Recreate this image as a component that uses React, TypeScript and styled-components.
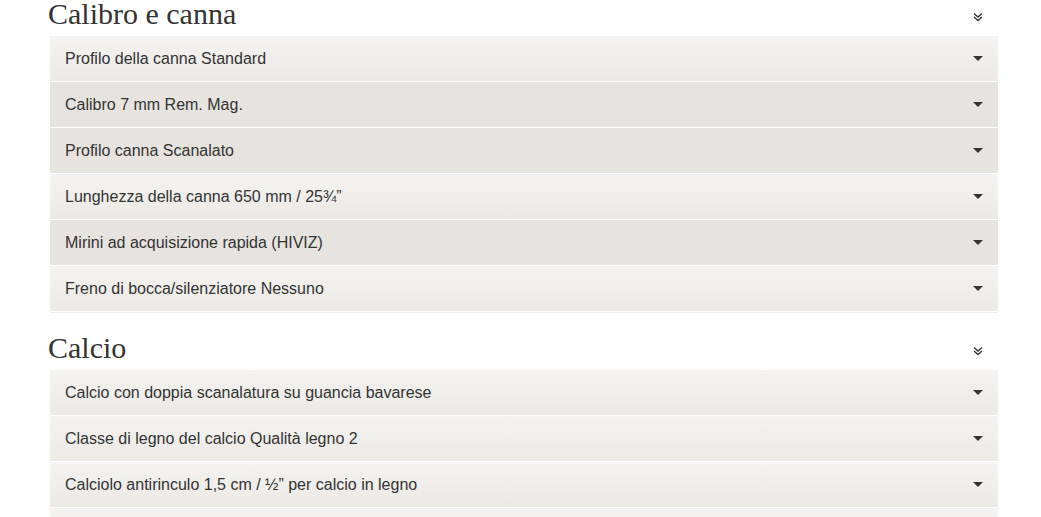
import styled, { createGlobalStyle } from "styled-components";

const GlobalStyle = createGlobalStyle`
  html, body {
    margin: 0;
    padding: 0;
    background: #ffffff;
  }
  body {
    font-family: "Liberation Sans", Arial, sans-serif;
    color: #333333;
    overflow: hidden;
  }
`;

const Page = styled.div`
  width: 950px;
  margin-left: 48px;
`;

const Section = styled.section<{ $first?: boolean }>`
  display: flex;
  flex-direction: column;
  margin-top: ${({ $first }) => ($first ? "0" : "21px")};
`;

const Header = styled.div`
  display: flex;
  justify-content: space-between;
  align-items: center;
  height: 28px;
  margin-bottom: 8px;
  padding-right: 15px;
`;

const Title = styled.h2`
  margin: 0;
  font-family: "Liberation Serif", "Times New Roman", serif;
  font-weight: 400;
  font-size: 30px;
  line-height: 28px;
  color: #333333;
`;

const CollapseIcon = styled.svg`
  width: 10px;
  height: 10px;
  margin-top: 6px;
`;

const List = styled.ul`
  list-style: none;
  margin: 0 0 0 2px;
  padding: 0;
  border-bottom: 1px solid #ececec;
`;

const Row = styled.li<{ $shade?: boolean }>`
  display: flex;
  align-items: center;
  justify-content: space-between;
  height: 45px;
  padding: 0 15px;
  border-bottom: 1px solid #ffffff;
  font-size: 16px;
  color: #333333;
  background: ${({ $shade }) =>
    $shade ? "#e7e3de" : "linear-gradient(to bottom, #f4f3f1, #ece9e4)"};
`;

const Caret = styled.span`
  width: 0;
  height: 0;
  border-left: 5px solid transparent;
  border-right: 5px solid transparent;
  border-top: 5px solid #333333;
`;

type Item = { label: string; shade?: boolean };

const sections: { title: string; items: Item[] }[] = [
  {
    title: "Calibro e canna",
    items: [
      { label: "Profilo della canna Standard" },
      { label: "Calibro 7 mm Rem. Mag.", shade: true },
      { label: "Profilo canna Scanalato", shade: true },
      { label: "Lunghezza della canna 650 mm / 25¾”" },
      { label: "Mirini ad acquisizione rapida (HIVIZ)", shade: true },
      { label: "Freno di bocca/silenziatore Nessuno" },
    ],
  },
  {
    title: "Calcio",
    items: [
      { label: "Calcio con doppia scanalatura su guancia bavarese" },
      { label: "Classe di legno del calcio Qualità legno 2" },
      { label: "Calciolo antirinculo 1,5 cm / ½” per calcio in legno" },
      { label: "" },
    ],
  },
];

function DoubleChevron() {
  return (
    <CollapseIcon viewBox="0 0 10 10" fill="none" stroke="#333" strokeWidth="1.4">
      <polyline points="1,1.5 5,5 9,1.5" />
      <polyline points="1,5 5,8.5 9,5" />
    </CollapseIcon>
  );
}

export default function App() {
  return (
    <>
      <GlobalStyle />
      <Page>
        {sections.map((section, i) => (
          <Section key={section.title} $first={i === 0}>
            <Header>
              <Title>{section.title}</Title>
              <DoubleChevron />
            </Header>
            <List>
              {section.items.map((item, index) => (
                <Row key={index} $shade={item.shade}>
                  <span>{item.label}</span>
                  <Caret />
                </Row>
              ))}
            </List>
          </Section>
        ))}
      </Page>
    </>
  );
}
